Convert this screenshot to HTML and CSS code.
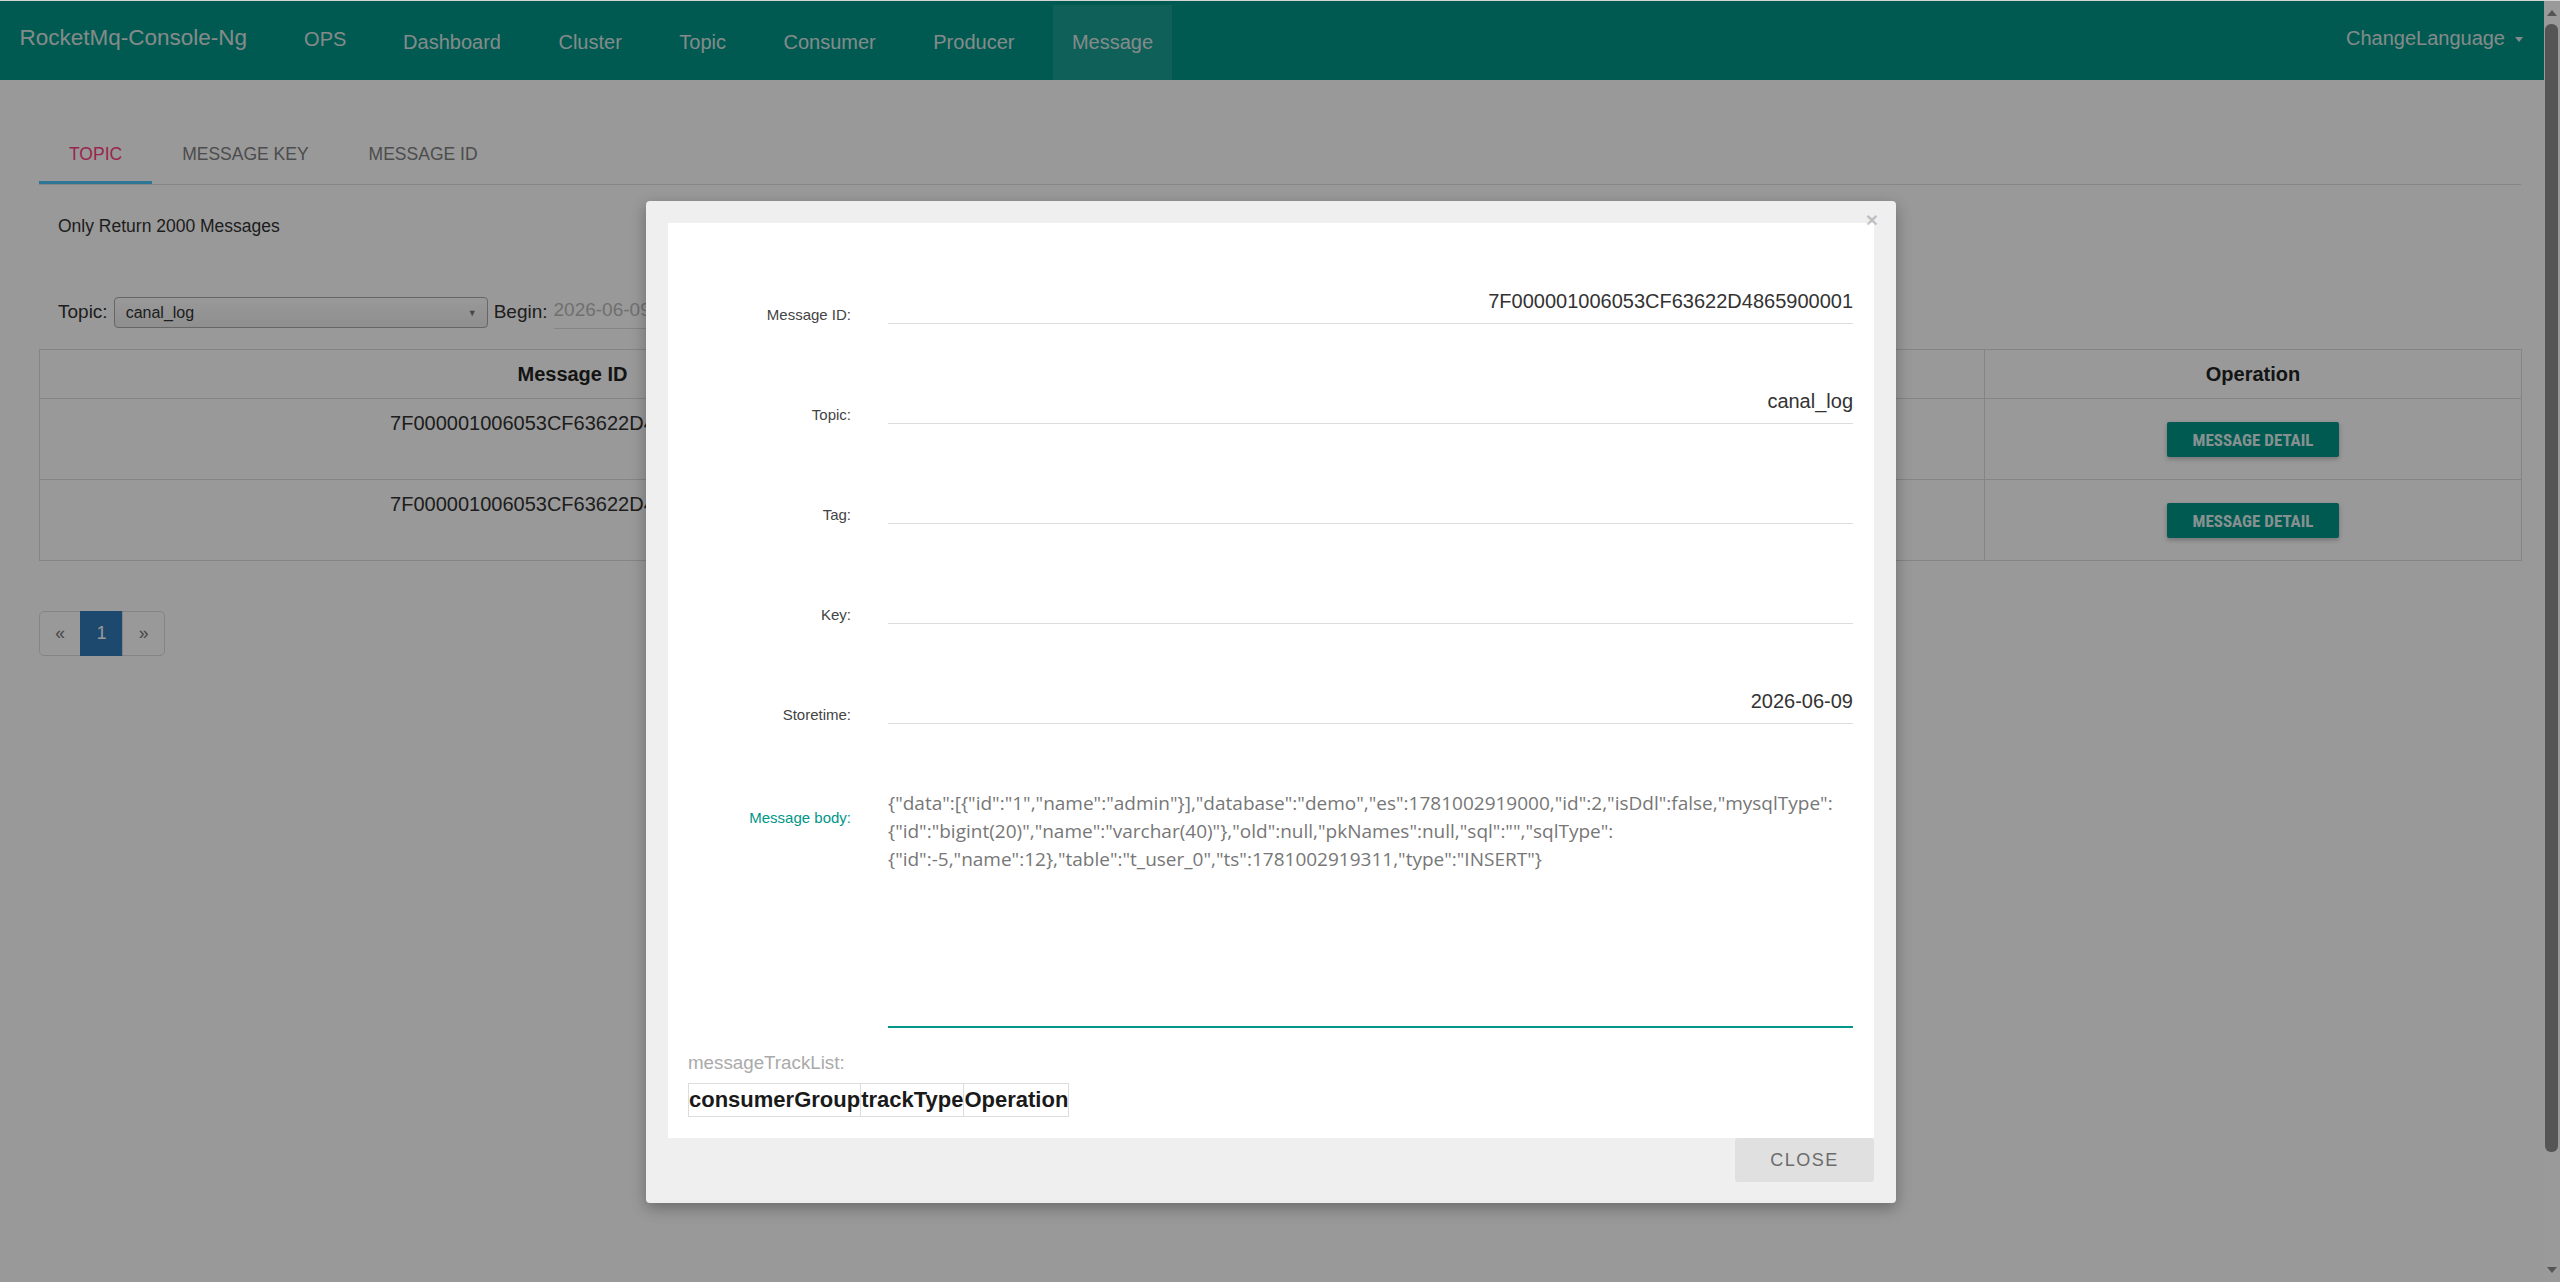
FILE: index.html
```html
<!DOCTYPE html>
<html lang="en">
<head>
    <meta charset="UTF-8">
    <meta name="viewport" content="width=device-width, initial-scale=1.0">
    <title>RocketMq-Console-Ng</title>
    <link rel="stylesheet" href="styles.css">
</head>
<body>
    <div class="window-edge"></div>
    <div class="screen">
        <div class="app">
            <nav class="navbar">
                <a class="brand" href="#">RocketMq-Console-Ng</a>
                <a class="ops-link" href="#">OPS</a>
                <ul class="nav-links">
                    <li><a href="#">Dashboard</a></li>
                    <li><a href="#">Cluster</a></li>
                    <li><a href="#">Topic</a></li>
                    <li><a href="#">Consumer</a></li>
                    <li><a href="#">Producer</a></li>
                    <li class="active"><a href="#">Message</a></li>
                </ul>
                <div class="lang-menu">ChangeLanguage <span class="caret"></span></div>
            </nav>

            <main class="content">
                <div class="tabs">
                    <div class="tab active">TOPIC</div>
                    <div class="tab">MESSAGE KEY</div>
                    <div class="tab">MESSAGE ID</div>
                </div>

                <div class="tab-pane">
                    <p class="notice">Only Return 2000 Messages</p>
                    <form class="query-form">
                        <label>Topic:</label>
                        <div class="select-box">
                            <span>canal_log</span>
                            <span class="select-arrow">&#9660;</span>
                        </div>
                        <label>Begin:</label>
                        <input class="date-input" type="text" value="2026-06-09 00:00:00">
                    </form>
                </div>

                <table class="result-table">
                    <colgroup>
                        <col style="width: 1066px">
                        <col style="width: 250px">
                        <col style="width: 250px">
                        <col style="width: 379px">
                        <col style="width: 537px">
                    </colgroup>
                    <thead>
                        <tr>
                            <th>Message ID</th>
                            <th>Tag</th>
                            <th>Key</th>
                            <th>StoreTime</th>
                            <th>Operation</th>
                        </tr>
                    </thead>
                    <tbody>
                        <tr>
                            <td>7F000001006053CF63622D4865900001</td>
                            <td></td>
                            <td></td>
                            <td>2026-06-09 18:55:19</td>
                            <td><button type="button" class="btn-raised">MESSAGE DETAIL</button></td>
                        </tr>
                        <tr>
                            <td>7F000001006053CF63622D4865900002</td>
                            <td></td>
                            <td></td>
                            <td>2026-06-09 18:55:19</td>
                            <td><button type="button" class="btn-raised">MESSAGE DETAIL</button></td>
                        </tr>
                    </tbody>
                </table>

                <ul class="pagination">
                    <li class="disabled"><a href="#">&laquo;</a></li>
                    <li class="active"><a href="#">1</a></li>
                    <li class="disabled"><a href="#">&raquo;</a></li>
                </ul>
            </main>

            <div class="backdrop"></div>

            <div class="dialog">
                <span class="dialog-close">&times;</span>
                <div class="dialog-body">
                    <div class="detail-row">
                        <label>Message ID:</label>
                        <div class="detail-field">7F000001006053CF63622D4865900001</div>
                    </div>
                    <div class="detail-row">
                        <label>Topic:</label>
                        <div class="detail-field">canal_log</div>
                    </div>
                    <div class="detail-row">
                        <label>Tag:</label>
                        <div class="detail-field"></div>
                    </div>
                    <div class="detail-row">
                        <label>Key:</label>
                        <div class="detail-field"></div>
                    </div>
                    <div class="detail-row">
                        <label>Storetime:</label>
                        <div class="detail-field">2026-06-09</div>
                    </div>
                    <div class="detail-row body-row">
                        <label>Message body:</label>
                        <div class="body-text">{"data":[{"id":"1","name":"admin"}],"database":"demo","es":1781002919000,"id":2,"isDdl":false,"mysqlType":{"id":"bigint(20)","name":"varchar(40)"},"old":null,"pkNames":null,"sql":"","sqlType":{"id":-5,"name":12},"table":"t_user_0","ts":1781002919311,"type":"INSERT"}</div>
                    </div>

                    <p class="track-title">messageTrackList:</p>
                    <table class="track-table">
                        <tr>
                            <th>consumerGroup</th>
                            <th>trackType</th>
                            <th>Operation</th>
                        </tr>
                    </table>
                </div>
                <div class="dialog-footer">
                    <button type="button" class="btn-flat">CLOSE</button>
                </div>
            </div>
        </div>

        <div class="scrollbar">
            <div class="sb-arrow up"></div>
            <div class="sb-track"><div class="sb-thumb"></div></div>
            <div class="sb-arrow down"></div>
        </div>
    </div>
</body>
</html>
```

FILE: styles.css
```css
/* Base */
:root {
    --teal: #009688;
    --pink: #ff4081;
    --blue: #337ab7;
    --line: #dddddd;
}

* {
    margin: 0;
    padding: 0;
    box-sizing: border-box;
}

html, body {
    height: 100%;
    overflow: hidden;
}

body {
    font-family: "Liberation Sans", Arial, sans-serif;
    font-size: 17.5px;
    line-height: 1.42857;
    color: #333;
    background: #fff;
}

a {
    text-decoration: none;
    color: inherit;
}

ul {
    list-style: none;
}

.window-edge {
    height: 1px;
    background: #d4d4d4;
}

.screen {
    display: flex;
    height: 1281px;
}

.app {
    flex: 1;
    position: relative;
    overflow: hidden;
    background: #fff;
}

/* Navbar */
.navbar {
    display: flex;
    align-items: flex-start;
    height: 79px;
    background: var(--teal);
    color: #dde7e5;
    font-size: 20px;
}

.brand {
    padding-left: 19.5px;
    padding-top: 1px;
    font-size: 22.5px;
    line-height: 72px;
}

.ops-link {
    margin-left: 57px;
    padding-top: 1px;
    line-height: 75px;
}

.nav-links {
    display: flex;
    gap: 20px;
    margin-left: 38px;
    margin-top: 4px;
}

.nav-links a {
    display: block;
    padding: 1px 18.75px 1px;
    line-height: 73px;
}

.nav-links .active a {
    background: rgba(255, 255, 255, 0.1);
}

.lang-menu {
    margin-left: auto;
    padding-right: 21px;
    padding-top: 1px;
    line-height: 73px;
    display: flex;
    align-items: center;
    gap: 10px;
}

.caret {
    width: 0;
    height: 0;
    border-left: 4.5px solid transparent;
    border-right: 4.5px solid transparent;
    border-top: 5px solid currentColor;
    margin-top: 2px;
}

/* Page content */
.content {
    padding: 0 23px 0 39px;
}

.tabs {
    display: flex;
    margin-top: 43px;
    border-bottom: 1px solid #e0e0e0;
}

.tab {
    padding: 0 30px;
    height: 61px;
    line-height: 62px;
    color: #808080;
    font-size: 17.5px;
}

.tab.active {
    color: var(--pink);
    box-shadow: inset 0 -3px 0 #4fc3f7;
}

.tab-pane {
    padding-left: 19px;
}

.notice {
    margin-top: 28.5px;
    line-height: 25px;
}

.query-form {
    display: flex;
    align-items: center;
    gap: 6px;
    height: 37px;
    margin-top: 54.5px;
    font-size: 19px;
}

.select-box {
    display: flex;
    align-items: center;
    justify-content: space-between;
    width: 374px;
    height: 31px;
    margin-top: 1px;
    padding: 2px 10px 0 11px;
    border: 1px solid #aaa;
    border-radius: 4px;
    background: linear-gradient(#fff, #eee);
    font-size: 16px;
}

.select-arrow {
    font-size: 9px;
    color: #777;
}

.date-input {
    width: 250px;
    border: none;
    border-bottom: 1px solid var(--line);
    padding: 2px 0 4px;
    font: inherit;
    color: #bbb;
    outline: none;
}

.btn-raised {
    height: 35px;
    padding: 0 13px;
    border: none;
    border-radius: 2px;
    background: var(--teal);
    color: rgba(255, 255, 255, 0.9);
    font-family: "Liberation Sans Narrow", "Roboto Condensed", "DejaVu Sans Condensed", Roboto, sans-serif;
    font-size: 17px;
    font-weight: bold;
    box-shadow: 0 2px 5px rgba(0, 0, 0, 0.26);
}

/* Result table */
.result-table {
    width: 2482px;
    margin-top: 19px;
    border-collapse: collapse;
    table-layout: fixed;
    font-size: 20px;
}

.result-table th,
.result-table td {
    border: 1px solid var(--line);
    padding: 10px;
    line-height: 28px;
    text-align: center;
    vertical-align: top;
}

.result-table th {
    color: #222;
}

.result-table .btn-raised {
    display: block;
    width: 172px;
    margin: 13px auto 12px;
}

/* Pagination */
.pagination {
    display: flex;
    margin-top: 50px;
}

.pagination a {
    display: block;
    width: 43px;
    padding: 9px 0;
    line-height: 25px;
    text-align: center;
    border: 1px solid var(--line);
    margin-left: -1px;
    color: #777;
}

.pagination li:first-child a {
    margin-left: 0;
    width: 42px;
    border-radius: 5px 0 0 5px;
}

.pagination li:last-child a {
    border-radius: 0 5px 5px 0;
}

.pagination .active a {
    background: var(--blue);
    border-color: var(--blue);
    color: #fff;
}

/* Modal */
.backdrop {
    position: absolute;
    inset: 0;
    background: rgba(0, 0, 0, 0.4);
}

.dialog {
    position: absolute;
    top: 200px;
    left: 646px;
    width: 1250px;
    padding: 22px 22px 21px;
    background: #efefef;
    border-radius: 4px;
    box-shadow: 0 5px 15px rgba(0, 0, 0, 0.3);
}

.dialog-close {
    position: absolute;
    top: 8px;
    right: 18px;
    font-size: 21px;
    font-weight: bold;
    line-height: 1;
    color: #000;
    opacity: 0.2;
}

.dialog-body {
    background: #fff;
    padding: 1px 21px 21px 20px;
}

.detail-row {
    display: grid;
    grid-template-columns: 163px 965px;
    column-gap: 37px;
    height: 100px;
}

.detail-row label {
    align-self: end;
    text-align: right;
    font-size: 15px;
    line-height: 17px;
    padding-bottom: 1px;
    color: #444;
}

.detail-field {
    display: flex;
    align-items: flex-end;
    justify-content: flex-end;
    border-bottom: 1px solid var(--line);
    padding-bottom: 10px;
    font-size: 20px;
    line-height: 24px;
    color: #333;
}

.detail-row.body-row {
    height: auto;
}

.body-row label {
    align-self: start;
    margin-top: 84.5px;
    padding-bottom: 0;
    color: var(--teal);
}

.body-text {
    margin-top: 65px;
    height: 239px;
    border-bottom: 2px solid var(--teal);
    font-family: "Open Sans", sans-serif;
    font-size: 19px;
    line-height: 28px;
    color: #777;
    overflow-wrap: break-word;
}

.track-title {
    margin-top: 22px;
    line-height: 26px;
    font-size: 18.75px;
    color: #aaa;
}

.track-table {
    margin-top: 7px;
    border-collapse: collapse;
    font-size: 22px;
}

.track-table th {
    border: 1px solid var(--line);
    padding: 0;
    line-height: 32px;
    color: #1a1a1a;
}

.dialog-footer {
    display: flex;
    justify-content: flex-end;
}

.btn-flat {
    width: 139px;
    height: 44px;
    border: none;
    border-radius: 3px;
    background: #e0e0e0;
    color: #6c6c6c;
    font-family: "Liberation Sans", Arial, sans-serif;
    font-size: 18px;
    letter-spacing: 1.5px;
}

/* Window scrollbar */
.scrollbar {
    width: 16px;
    display: flex;
    flex-direction: column;
    align-items: center;
    background: #9a9a9a;
}

.sb-arrow {
    width: 0;
    height: 0;
    border-left: 5px solid transparent;
    border-right: 5px solid transparent;
}

.sb-arrow.up {
    margin-top: 9px;
    border-bottom: 6px solid #555;
}

.sb-arrow.down {
    margin-bottom: 9px;
    border-top: 6px solid #555;
}

.sb-track {
    flex: 1;
    width: 100%;
    padding: 8px 2px 0 1px;
}

.sb-thumb {
    height: 1128px;
    border-radius: 6px;
    background: #555;
}
```
